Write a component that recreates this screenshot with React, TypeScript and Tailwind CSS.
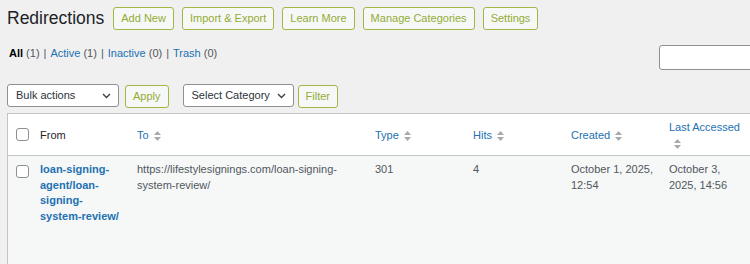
import React from 'react';

const font = { fontFamily: '"Liberation Sans", Arial, sans-serif' };

const SortIcon = () => (
  <span className="inline-block align-middle ml-[5px]">
    <svg width="7" height="12" viewBox="0 0 7 12" className="block">
      <polygon points="3.5,1 7,5 0,5" fill="#a7aaad" />
      <polygon points="0,7 7,7 3.5,11" fill="#a7aaad" />
    </svg>
  </span>
);

const Chevron = () => (
  <svg width="9" height="6" viewBox="0 0 9 6" className="block">
    <polyline points="1,1 4.5,4.5 8,1" fill="none" stroke="#3c434a" strokeWidth="1.4" />
  </svg>
);

const Checkbox = ({ className = '' }: { className?: string }) => (
  <span className={`block w-[13px] h-[13px] bg-white border border-[#8c8f94] rounded-[3px] ${className}`} />
);

const GreenButton = ({ label }: { label: string }) => (
  <button className="h-[23px] px-[7px] border border-[#a3b745] rounded-[3px] bg-[#f6f7f7] text-[#93ad35] text-[11px] leading-none whitespace-nowrap">
    {label}
  </button>
);

const Select = ({ label, width }: { label: string; width: string }) => (
  <div className={`h-[23px] ${width} border border-[#8c8f94] rounded-[3px] bg-white pl-[8px] pr-[7px] flex items-center justify-between text-[#2c3338] text-[11px]`}>
    <span>{label}</span>
    <Chevron />
  </div>
);

export default function App() {
  return (
    <div className="w-[750px] h-[264px] overflow-hidden bg-[#f0f0f1]" style={font}>
      <div className="w-[820px] ml-[7px] pt-[7px]">
        {/* Heading */}
        <div className="flex items-center h-[23px] gap-[8px]">
          <h1 className="text-[17.5px] leading-[23px] font-normal text-[#1d2327] mr-[1px]">Redirections</h1>
          <GreenButton label="Add New" />
          <GreenButton label="Import & Export" />
          <GreenButton label="Learn More" />
          <GreenButton label="Manage Categories" />
          <GreenButton label="Settings" />
        </div>

        {/* Views + search */}
        <div className="flex justify-between items-start mt-[15px]">
          <ul className="flex text-[11px] leading-[15px] text-[#50575e] mt-[1px] ml-[2px]">
            <li>
              <span className="font-semibold text-[#000]">All</span> (1)
              <span className="mx-[4px]">|</span>
            </li>
            <li>
              <span className="text-[#2271b1]">Active</span> (1)
              <span className="mx-[4px]">|</span>
            </li>
            <li>
              <span className="text-[#2271b1]">Inactive</span> (0)
              <span className="mx-[4px]">|</span>
            </li>
            <li>
              <span className="text-[#2271b1]">Trash</span> (0)
            </li>
          </ul>
          <input className="w-[168px] h-[25px] bg-white border border-[#8c8f94] rounded-[3px]" />
        </div>

        {/* Tablenav */}
        <div className="flex items-center mt-[13px]">
          <Select label="Bulk actions" width="w-[112px]" />
          <div className="ml-[6px]">
            <GreenButton label="Apply" />
          </div>
          <div className="ml-[14px]">
            <Select label="Select Category" width="w-[111px]" />
          </div>
          <div className="ml-[4px]">
            <GreenButton label="Filter" />
          </div>
        </div>

        {/* Table */}
        <div className="mt-[5px] border border-[#c3c4c7] bg-white w-[760px]">
          <table className="table-fixed border-separate border-spacing-0 w-[748px] text-[11px]">
            <colgroup>
              <col className="w-[24px]" />
              <col className="w-[97px]" />
              <col className="w-[238px]" />
              <col className="w-[98px]" />
              <col className="w-[98px]" />
              <col className="w-[98px]" />
              <col className="w-[95px]" />
            </colgroup>
            <thead>
              <tr className="text-left leading-[16px] font-normal">
                <th className="border-b border-[#c3c4c7] pl-[8px] align-middle">
                  <Checkbox />
                </th>
                <th className="border-b border-[#c3c4c7] pl-[8px] font-normal text-[#1d2327] align-middle">From</th>
                <th className="border-b border-[#c3c4c7] pl-[8px] font-normal align-middle">
                  <span className="text-[#2271b1]">To</span>
                  <SortIcon />
                </th>
                <th className="border-b border-[#c3c4c7] pl-[8px] font-normal align-middle">
                  <span className="text-[#2271b1]">Type</span>
                  <SortIcon />
                </th>
                <th className="border-b border-[#c3c4c7] pl-[8px] font-normal align-middle">
                  <span className="text-[#2271b1]">Hits</span>
                  <SortIcon />
                </th>
                <th className="border-b border-[#c3c4c7] pl-[8px] font-normal align-middle">
                  <span className="text-[#2271b1]">Created</span>
                  <SortIcon />
                </th>
                <th className="border-b border-[#c3c4c7] pl-[8px] pr-[12px] pt-[5px] pb-[4px] font-normal align-middle">
                  <span className="text-[#2271b1]">Last Accessed</span>
                  <SortIcon />
                </th>
              </tr>
            </thead>
            <tbody>
              <tr className="bg-[#f6f7f7] text-[#50575e] leading-[15.5px] align-top">
                <td className="pl-[8px] pt-[9px] h-[120px]">
                  <Checkbox />
                </td>
                <td className="pl-[8px] pr-[8px] pt-[6px] break-words">
                  <span className="text-[#2271b1] font-bold">loan-signing-agent/loan-signing-system-review/</span>
                </td>
                <td className="pl-[8px] pr-[8px] pt-[6px] break-words">
                  https://lifestylesignings.com/loan-signing-system-review/
                </td>
                <td className="pl-[8px] pr-[8px] pt-[6px]">301</td>
                <td className="pl-[8px] pr-[8px] pt-[6px]">4</td>
                <td className="pl-[8px] pr-[6px] pt-[6px]">October 1, 2025, 12:54</td>
                <td className="pl-[8px] pr-[12px] pt-[6px]">October 3, 2025, 14:56</td>
              </tr>
            </tbody>
          </table>
        </div>
      </div>
    </div>
  );
}
